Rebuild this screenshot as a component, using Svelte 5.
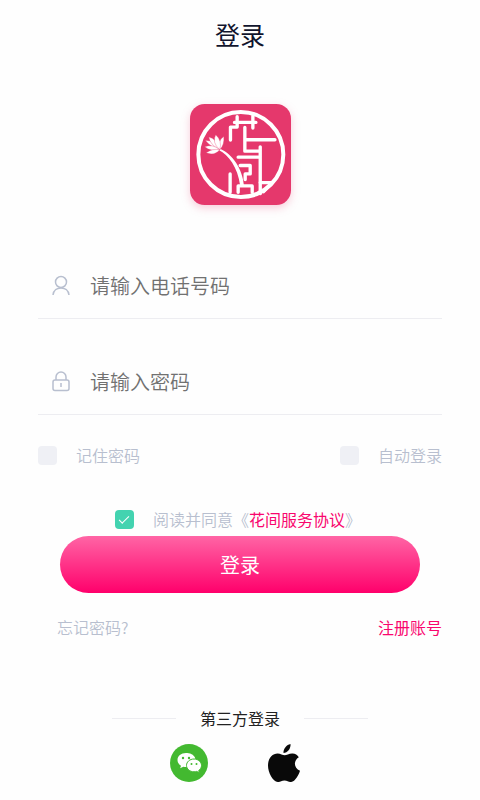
<script lang="ts">
    let phone = "";
    let password = "";
    let remember = false;
    let autoLogin = false;
    let agreed = true;
</script>

<main class="page">
    <h1 class="title">登录</h1>

    <svg class="logo" viewBox="30 28 302 302" role="img" aria-label="花间">
        <rect x="30" y="28" width="302" height="302" rx="44" fill="#e5386c" />
        <g fill="none" stroke="#fff" stroke-width="10" stroke-linecap="round" stroke-linejoin="round">
            <circle cx="182" cy="179" r="127" stroke-width="12" />
            <path d="M163 83H227M171 66V97H151V136M218 64V100" />
            <path d="M194 98V169H239M199 135H284M174 187H240M240 156V296" />
            <path d="M240 263H276L250 290" />
            <path d="M180 212H210V237H195V254M174 292V273H216V292M150 237V292" />
        </g>
        <path d="M117 166C144 179 173 216 180 272L191 270C187 223 158 179 120 162Z" fill="#fff" />
        <g fill="#fff" stroke="#e5386c" stroke-width="1">
            <path d="M119 165Q92 157 76 137Q102 135 119 165Z" />
            <path d="M119 165Q90 150 86 127Q109 130 119 165Z" />
            <path d="M119 165Q134 148 131 125Q112 137 119 165Z" />
            <path d="M119 165Q94 142 107 120Q127 138 119 165Z" />
            <path d="M119 165Q97 146 74 156Q96 172 119 165Z" />
            <path d="M119 165Q97 160 78 174Q104 184 119 165Z" />
        </g>
    </svg>

    <form class="form" on:submit|preventDefault>
        <label class="field">
            <svg class="field-icon" viewBox="0 0 20 22" aria-hidden="true">
                <circle cx="10" cy="7" r="5.500" />
                <path d="M2 20C3 10.500 17 10.500 18 20" />
            </svg>
            <input type="tel" bind:value={phone} placeholder="请输入电话号码" aria-label="电话号码" />
        </label>
        <label class="field">
            <svg class="field-icon" viewBox="0 0 20 22" aria-hidden="true">
                <rect x="2" y="9" width="16" height="10.500" rx="2" />
                <path d="M5 9V6a5 5 0 0 1 10 0V9M10 12V16" />
            </svg>
            <input type="password" bind:value={password} placeholder="请输入密码" aria-label="密码" />
        </label>

        <div class="options">
            <label class="check"><input type="checkbox" bind:checked={remember} />记住密码</label>
            <label class="check"><input type="checkbox" bind:checked={autoLogin} />自动登录</label>
        </div>

        <div class="agreement">
            <label class="check"><input type="checkbox" bind:checked={agreed} />阅读并同意《</label><a
                class="accent"
                href="#terms">花间服务协议</a
            >》
        </div>

        <button class="submit" type="submit">登录</button>
    </form>

    <nav class="links">
        <a href="#forgot">忘记密码?</a>
        <a class="accent" href="#register">注册账号</a>
    </nav>

    <div class="divider">第三方登录</div>

    <div class="providers">
        <button type="button" aria-label="微信登录">
            <svg viewBox="0 0 38 38" aria-hidden="true">
                <circle cx="19" cy="19" r="19" fill="#43b930" />
                <path
                    d="M16 9C11 9 7.500 12 7.500 16C7.500 18.400 8.800 20.400 11 21.700L10.200 24.300L13.300 22.700Q14.700 23.100 16.200 23.100A8.500 7.100 0 1 0 16 9Z"
                    fill="#fff"
                />
                <path
                    d="M24 15C19.800 15 16.500 17.900 16.500 21.400S19.800 27.800 24 27.800Q25.500 27.800 26.700 27.400L29.400 28.800L28.700 26.500C30.500 25.300 31.500 23.500 31.500 21.400C31.500 17.900 28.200 15 24 15Z"
                    fill="#fff"
                    stroke="#43b930"
                />
                <g fill="#43b930">
                    <circle cx="13" cy="14" r="1.200" />
                    <circle cx="19" cy="14" r="1.200" />
                    <circle cx="21.500" cy="20" r="1" />
                    <circle cx="26.500" cy="20" r="1" />
                </g>
            </svg>
        </button>
        <button type="button" aria-label="Apple 登录">
            <svg class="apple" viewBox="0 0 32 38" aria-hidden="true">
                <path d="M22.500 0C22.900 4.700 19.500 8.900 15.500 9C15.100 4.700 18.700 .700 22.500 0Z" />
                <path
                    d="M30.800 13.200C25.200 16.600 25.700 24 32 26.700C30.700 30.900 27.200 37.500 23.200 38C20.700 38.200 19.500 36.500 16.500 36.500C13.400 36.500 12 38.200 9.800 38C4.800 37.700 0 28.700 0 21.500C0 13.900 4.600 9.500 9.600 9.500C12.500 9.500 14.700 11.300 16.700 11.300C18.500 11.300 21.200 9.200 24.600 9.400C27.200 9.500 29.500 10.800 30.800 13.200Z"
                />
            </svg>
        </button>
    </div>
</main>

<style>
    :global(body) {
        margin: 0;
        background: #fefefe;
    }

    .page {
        --muted: #b8bfcf;
        --accent: #f9066e;
        --line: #ededf1;
        box-sizing: border-box;
        display: flex;
        flex-direction: column;
        padding: 14px 38px;
        font-family: "Noto Sans CJK SC", sans-serif;
        font-size: 16px;
        font-weight: 350;
        line-height: 24px;
        color: var(--muted);
    }

    .title {
        margin: 0;
        text-align: center;
        font-size: 25px;
        font-weight: 400;
        line-height: 40px;
        color: #10142d;
    }

    .logo {
        align-self: center;
        width: 101px;
        height: 101px;
        margin: 50px 0 49px;
        filter: drop-shadow(0 3px 4px #e5386c40);
    }

    .form {
        display: flex;
        flex-direction: column;
    }

    .field {
        display: flex;
        align-items: center;
        gap: 19px;
        height: 64px;
        padding-left: 13px;
        border-bottom: 1px solid var(--line);
    }
    .field + .field {
        margin-top: 31px;
    }
    .field-icon {
        flex: none;
        width: 20px;
        height: 22px;
        fill: none;
        stroke: var(--muted);
        stroke-width: 1.5;
    }
    .field input {
        flex: 1;
        min-width: 0;
        border: 0;
        padding: 0;
        outline: none;
        background: none;
        font: inherit;
        font-size: 20px;
        line-height: 32px;
        color: #333;
    }
    .field input::placeholder {
        color: #717171;
        opacity: 1;
    }

    .options,
    .links {
        display: flex;
        justify-content: space-between;
    }
    .options {
        margin-top: 28px;
    }

    .check {
        display: flex;
        align-items: center;
        gap: 19px;
    }
    .check input {
        appearance: none;
        display: grid;
        place-items: center;
        width: 19px;
        height: 19px;
        margin: 0;
        border-radius: 4px;
        background: #eff0f5;
    }
    .check input:checked {
        background: #43d3b0;
    }
    .check input:checked::before {
        content: "";
        width: 9px;
        height: 4px;
        border: solid #fff;
        border-width: 0 0 1px 1px;
        transform: translateY(-1px) rotate(-45deg);
    }

    .agreement {
        display: flex;
        justify-content: center;
        margin-top: 40px;
        padding-right: 4px;
    }

    a {
        color: inherit;
        text-decoration: none;
    }
    .accent {
        color: var(--accent);
        font-weight: 400;
    }

    .submit {
        height: 57px;
        margin: 5px 22px 0;
        border: 0;
        border-radius: 29px;
        background: linear-gradient(#ff65a5, #ff006b);
        font: inherit;
        font-size: 20px;
        font-weight: 400;
        color: #fff;
    }

    .links {
        margin-top: 22px;
        padding-left: 19px;
    }

    .divider {
        display: flex;
        align-items: center;
        justify-content: center;
        gap: 24px;
        margin-top: 67px;
        font-weight: 400;
        color: #222;
    }
    .divider::before,
    .divider::after {
        content: "";
        width: 64px;
        height: 1px;
        background: var(--line);
    }

    .providers {
        display: flex;
        justify-content: center;
        gap: 60px;
        margin-top: 14px;
        padding-right: 10px;
    }
    .providers button {
        display: flex;
        border: 0;
        padding: 0;
        background: none;
    }
    .providers svg {
        width: 38px;
        height: 38px;
    }
    .providers .apple {
        width: 32px;
        fill: #090909;
    }
</style>
